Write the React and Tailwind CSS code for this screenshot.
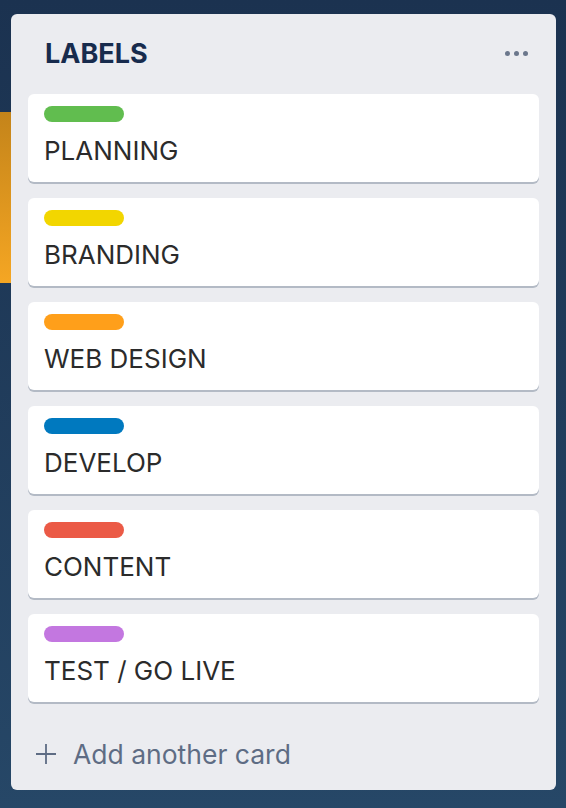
import React from 'react';

const labels = [
  { name: 'PLANNING', color: 'bg-[#61bd4f]' },
  { name: 'BRANDING', color: 'bg-[#f2d600]' },
  { name: 'WEB DESIGN', color: 'bg-[#ff9f1a]' },
  { name: 'DEVELOP', color: 'bg-[#0079bf]' },
  { name: 'CONTENT', color: 'bg-[#eb5a46]' },
  { name: 'TEST / GO LIVE', color: 'bg-[#c377e0]' },
];

const App = () => {
  return (
    <div
      className="w-[566px] h-[808px] overflow-hidden flex bg-gradient-to-b from-[#1b3250] to-[#264767]"
      style={{ fontFamily: 'Inter, "Helvetica Neue", Arial, sans-serif' }}
    >
      <div className="w-[11px] shrink-0">
        <div className="mt-[112px] h-[171px] w-full bg-gradient-to-b from-[#c4841a] to-[#f5a623]" />
      </div>

      <div className="mt-[14px] w-[545px] h-[776px] rounded-md bg-[#ebecf0] flex flex-col">
        <div className="flex items-center justify-between pl-[34px] pr-[28px] h-[80px]">
          <h2 className="text-[27px] leading-none font-bold text-[#172b4d] -mt-[2px]">LABELS</h2>
          <div className="flex gap-[4px] -mt-[2px]">
            <span className="size-[5px] rounded-full bg-[#6b778c]" />
            <span className="size-[5px] rounded-full bg-[#6b778c]" />
            <span className="size-[5px] rounded-full bg-[#6b778c]" />
          </div>
        </div>

        <div className="flex flex-col gap-4 px-[17px]">
          {labels.map((l) => (
            <div
              key={l.name}
              className="h-[88px] bg-white rounded-md shadow-[0_2px_0_#b3bac5] pl-[16px] pt-[12px]"
            >
              <div className={`w-[80px] h-[16px] rounded-full ${l.color}`} />
              <p className="mt-[14px] text-[26px] leading-[30px] text-[#2b2b2b]">{l.name}</p>
            </div>
          ))}
        </div>

        <div className="flex items-center gap-[16px] pl-[24px] mt-[39px] text-[#5e6c84]">
          <svg width="22" height="22" viewBox="0 0 22 22" fill="none" stroke="#5e6c84" strokeWidth="1.8">
            <path d="M11 1v20M1 11h20" />
          </svg>
          <span className="text-[26.5px] leading-none">Add another card</span>
        </div>
      </div>
    </div>
  );
};

export default App;
